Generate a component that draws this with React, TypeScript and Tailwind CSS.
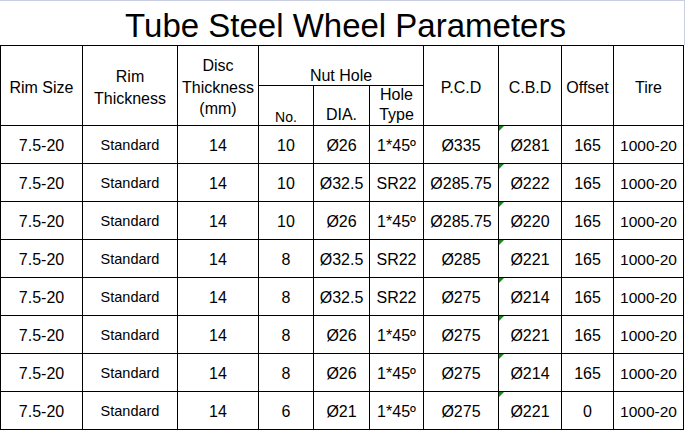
const rows = [
  ["7.5-20", "Standard", "14", "10", "Ø26", "1*45º", "Ø335", "Ø281", "165", "1000-20"],
  ["7.5-20", "Standard", "14", "10", "Ø32.5", "SR22", "Ø285.75", "Ø222", "165", "1000-20"],
  ["7.5-20", "Standard", "14", "10", "Ø26", "1*45º", "Ø285.75", "Ø220", "165", "1000-20"],
  ["7.5-20", "Standard", "14", "8", "Ø32.5", "SR22", "Ø285", "Ø221", "165", "1000-20"],
  ["7.5-20", "Standard", "14", "8", "Ø32.5", "SR22", "Ø275", "Ø214", "165", "1000-20"],
  ["7.5-20", "Standard", "14", "8", "Ø26", "1*45º", "Ø275", "Ø221", "165", "1000-20"],
  ["7.5-20", "Standard", "14", "8", "Ø26", "1*45º", "Ø275", "Ø214", "165", "1000-20"],
  ["7.5-20", "Standard", "14", "6", "Ø21", "1*45º", "Ø275", "Ø221", "0", "1000-20"],
];

// Excel's "number stored as text" marker
const GreenFlag = () => (
  <svg className="absolute left-0 top-0" width="5" height="5" viewBox="0 0 5 5">
    <polygon points="0,0 5,0 0,5" fill="#138a13" />
  </svg>
);

const HeadCell = ({ children, className = "" }: { children: React.ReactNode; className?: string }) => (
  <div
    className={`row-span-2 bg-white flex items-center justify-center text-center text-[16px] leading-[21.5px] pt-[4px] ${className}`}
  >
    <div>{children}</div>
  </div>
);

const App = () => {
  return (
    <div className="w-[685px] h-[430px] bg-white text-black font-['Liberation_Sans',Arial,sans-serif] overflow-hidden">
      {/* Title */}
      <div className="h-[45px] border-t border-r border-[#c9cee2] flex items-center justify-center pt-[5px] pl-[7px]">
        <h1 className="text-[33px] leading-none whitespace-nowrap">Tube Steel Wheel Parameters</h1>
      </div>

      {/* Table */}
      <div className="w-[684px] grid grid-cols-[81px_94px_80px_54px_55px_53px_74px_62px_51px_69px] grid-rows-[39px_39px_repeat(8,37px)] gap-px p-px bg-black">
        <HeadCell>Rim Size</HeadCell>
        <HeadCell>
          Rim
          <br />
          Thickness
        </HeadCell>
        <HeadCell>
          Disc
          <br />
          Thickness
          <br />
          (mm)
        </HeadCell>
        <div className="col-span-3 bg-white flex items-end justify-center text-[16px] leading-[18px]">
          Nut Hole
        </div>
        <HeadCell>P.C.D</HeadCell>
        <HeadCell>C.B.D</HeadCell>
        <HeadCell>Offset</HeadCell>
        <HeadCell>Tire</HeadCell>

        <div className="bg-white flex items-end justify-center text-[14px] leading-[16px]">No.</div>
        <div className="bg-white flex items-end justify-center text-[16px] leading-[18px] pb-px">DIA.</div>
        <div className="bg-white flex items-end justify-center text-center text-[16px] leading-[20px]">
          <div>
            Hole
            <br />
            Type
          </div>
        </div>

        {rows.map((row, r) =>
          row.map((cell, c) => (
            <div
              key={`${r}-${c}`}
              className={`relative bg-white flex items-center justify-center whitespace-nowrap pt-[2px] ${
                c === 1 ? "text-[14.5px]" : c === 9 ? "text-[15.5px]" : "text-[16px]"
              }`}
            >
              {c === 7 && <GreenFlag />}
              {cell}
            </div>
          ))
        )}
      </div>
    </div>
  );
};

export default App;
